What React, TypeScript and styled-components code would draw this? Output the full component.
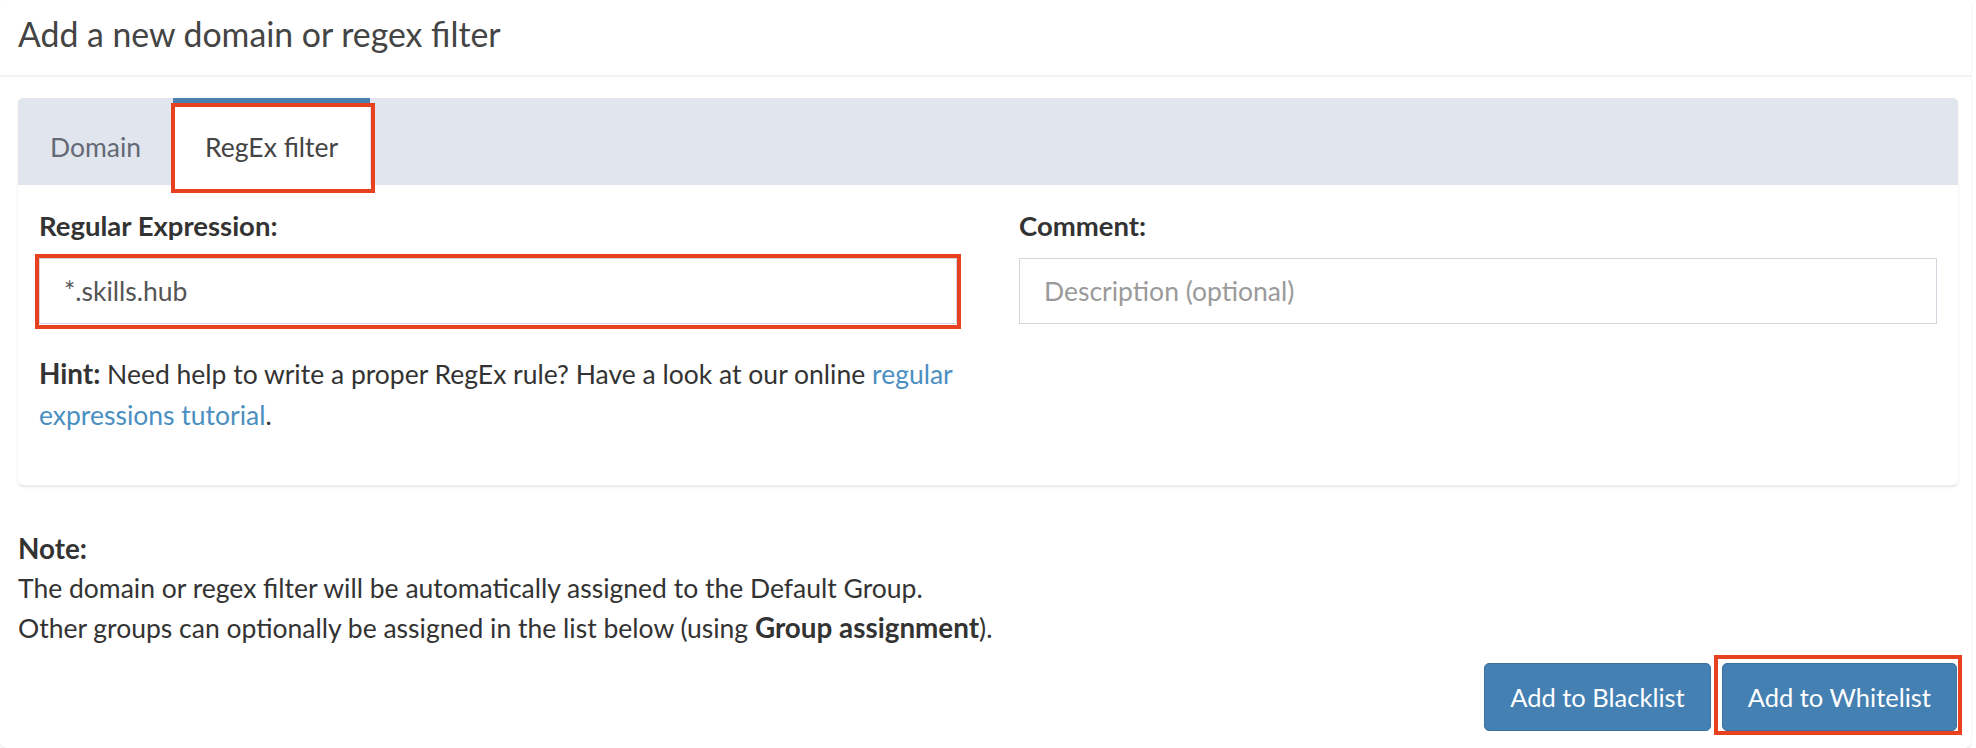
import React from "react";
import styled, { createGlobalStyle } from "styled-components";

const Global = createGlobalStyle`
  html, body {
    margin: 0;
    padding: 0;
    background: #ffffff;
  }
  body {
    font-family: Lato, "Liberation Sans", sans-serif;
    color: #333333;
  }
  * { box-sizing: border-box; }
`;

const Box = styled.div`
  width: 1971px;
  height: 748px;
  background: #ffffff;
  border-radius: 6px;
  box-shadow: 0 1px 2px rgba(0, 0, 0, 0.12);
  display: flex;
  flex-direction: column;
`;

const Header = styled.div`
  height: 77px;
  padding: 0 18px;
  display: flex;
  align-items: center;
  border-bottom: 2px solid #f2f2f2;
`;

const Title = styled.h3`
  margin: 0;
  font-size: 33.8px;
  font-weight: 400;
  color: #444444;
  padding-bottom: 8px;
`;

const Body = styled.div`
  padding: 21px 13px 0 18px;
  display: flex;
  flex-direction: column;
`;

const TabBox = styled.div`
  height: 387px;
  background: #ffffff;
  border-radius: 5px;
  box-shadow: 0 2px 3px rgba(0, 0, 0, 0.1);
  display: flex;
  flex-direction: column;
`;

const TabBar = styled.div`
  height: 87px;
  background: #e1e5ee;
  border-radius: 5px 5px 0 0;
  display: flex;
  align-items: stretch;
`;

const Tab = styled.div<{ $active?: boolean }>`
  padding: 5px 32px 0 32px;
  display: flex;
  align-items: center;
  font-size: 26.5px;
  color: ${(p) => (p.$active ? "#444444" : "#636975")};
  background: ${(p) => (p.$active ? "#ffffff" : "transparent")};
  border-top: 5px solid ${(p) => (p.$active ? "#4a7fb0" : "transparent")};
  position: relative;
`;

const Marker = styled.span<{ $t: number; $r: number; $b: number; $l: number }>`
  position: absolute;
  top: ${(p) => p.$t}px;
  right: ${(p) => p.$r}px;
  bottom: ${(p) => p.$b}px;
  left: ${(p) => p.$l}px;
  border: 4px solid #e8411f;
  pointer-events: none;
  z-index: 2;
`;

const TabContent = styled.div`
  padding: 22px 21px 0 21px;
  display: grid;
  grid-template-columns: 1fr 1fr;
  column-gap: 62px;
`;

const Field = styled.div`
  display: flex;
  flex-direction: column;
`;

const Label = styled.label`
  font-size: 27.5px;
  font-weight: 700;
  color: #333333;
  line-height: 38px;
  margin-bottom: 13px;
`;

const InputWrap = styled.div`
  position: relative;
  display: flex;
`;

const Input = styled.input`
  height: 66px;
  width: 100%;
  border: 1px solid #d2d6de;
  border-radius: 0;
  padding: 0 24px;
  font-family: Lato, "Liberation Sans", sans-serif;
  font-size: 26.5px;
  color: #555555;
  background: #ffffff;
  outline: none;
  &::placeholder {
    color: #9a9a9a;
  }
`;

const Hint = styled.p`
  margin: 29px 0 0 0;
  font-size: 26.5px;
  line-height: 41px;
  color: #333333;
  white-space: nowrap;
`;

const Strong = styled.strong`
  font-weight: 700;
  font-size: 1.05em;
`;

const Link = styled.a`
  color: #4b8fc1;
  text-decoration: none;
`;

const Note = styled.div`
  margin-top: 44px;
  font-size: 26.5px;
  line-height: 39px;
  color: #333333;
`;

const Actions = styled.div`
  display: flex;
  justify-content: flex-end;
  gap: 11px;
  margin-top: 15px;
  padding-right: 1px;
`;

const Button = styled.button`
  height: 68px;
  padding: 0 25px;
  background: #4580b2;
  border: 1px solid #3c72a0;
  border-radius: 5px;
  color: #ffffff;
  font-family: Lato, "Liberation Sans", sans-serif;
  font-size: 25.5px;
  position: relative;
  overflow: visible;
`;

export default function App() {
  return (
    <>
      <Global />
      <Box>
        <Header>
          <Title>Add a new domain or regex filter</Title>
        </Header>
        <Body>
          <TabBox>
            <TabBar>
              <Tab>Domain</Tab>
              <Tab $active>
                RegEx filter
                <Marker $t={0} $r={-5} $b={-8} $l={-2} />
              </Tab>
            </TabBar>
            <TabContent>
              <Field>
                <Label>Regular Expression:</Label>
                <InputWrap>
                  <Input defaultValue="*.skills.hub" />
                  <Marker $t={-4} $r={-4} $b={-5} $l={-4} />
                </InputWrap>
                <Hint>
                  <Strong>Hint:</Strong> Need help to write a proper RegEx rule? Have a look at our online{" "}
                  <Link href="#">regular</Link>
                  <br />
                  <Link href="#">expressions tutorial</Link>.
                </Hint>
              </Field>
              <Field>
                <Label>Comment:</Label>
                <InputWrap>
                  <Input placeholder="Description (optional)" />
                </InputWrap>
              </Field>
            </TabContent>
          </TabBox>
          <Note>
            <Strong>Note:</Strong>
            <br />
            The domain or regex filter will be automatically assigned to the Default Group.
            <br />
            Other groups can optionally be assigned in the list below (using <Strong>Group assignment</Strong>).
          </Note>
          <Actions>
            <Button>Add to Blacklist</Button>
            <Button>
              Add to Whitelist
              <Marker $t={-9} $r={-6} $b={-5} $l={-9} />
            </Button>
          </Actions>
        </Body>
      </Box>
    </>
  );
}
